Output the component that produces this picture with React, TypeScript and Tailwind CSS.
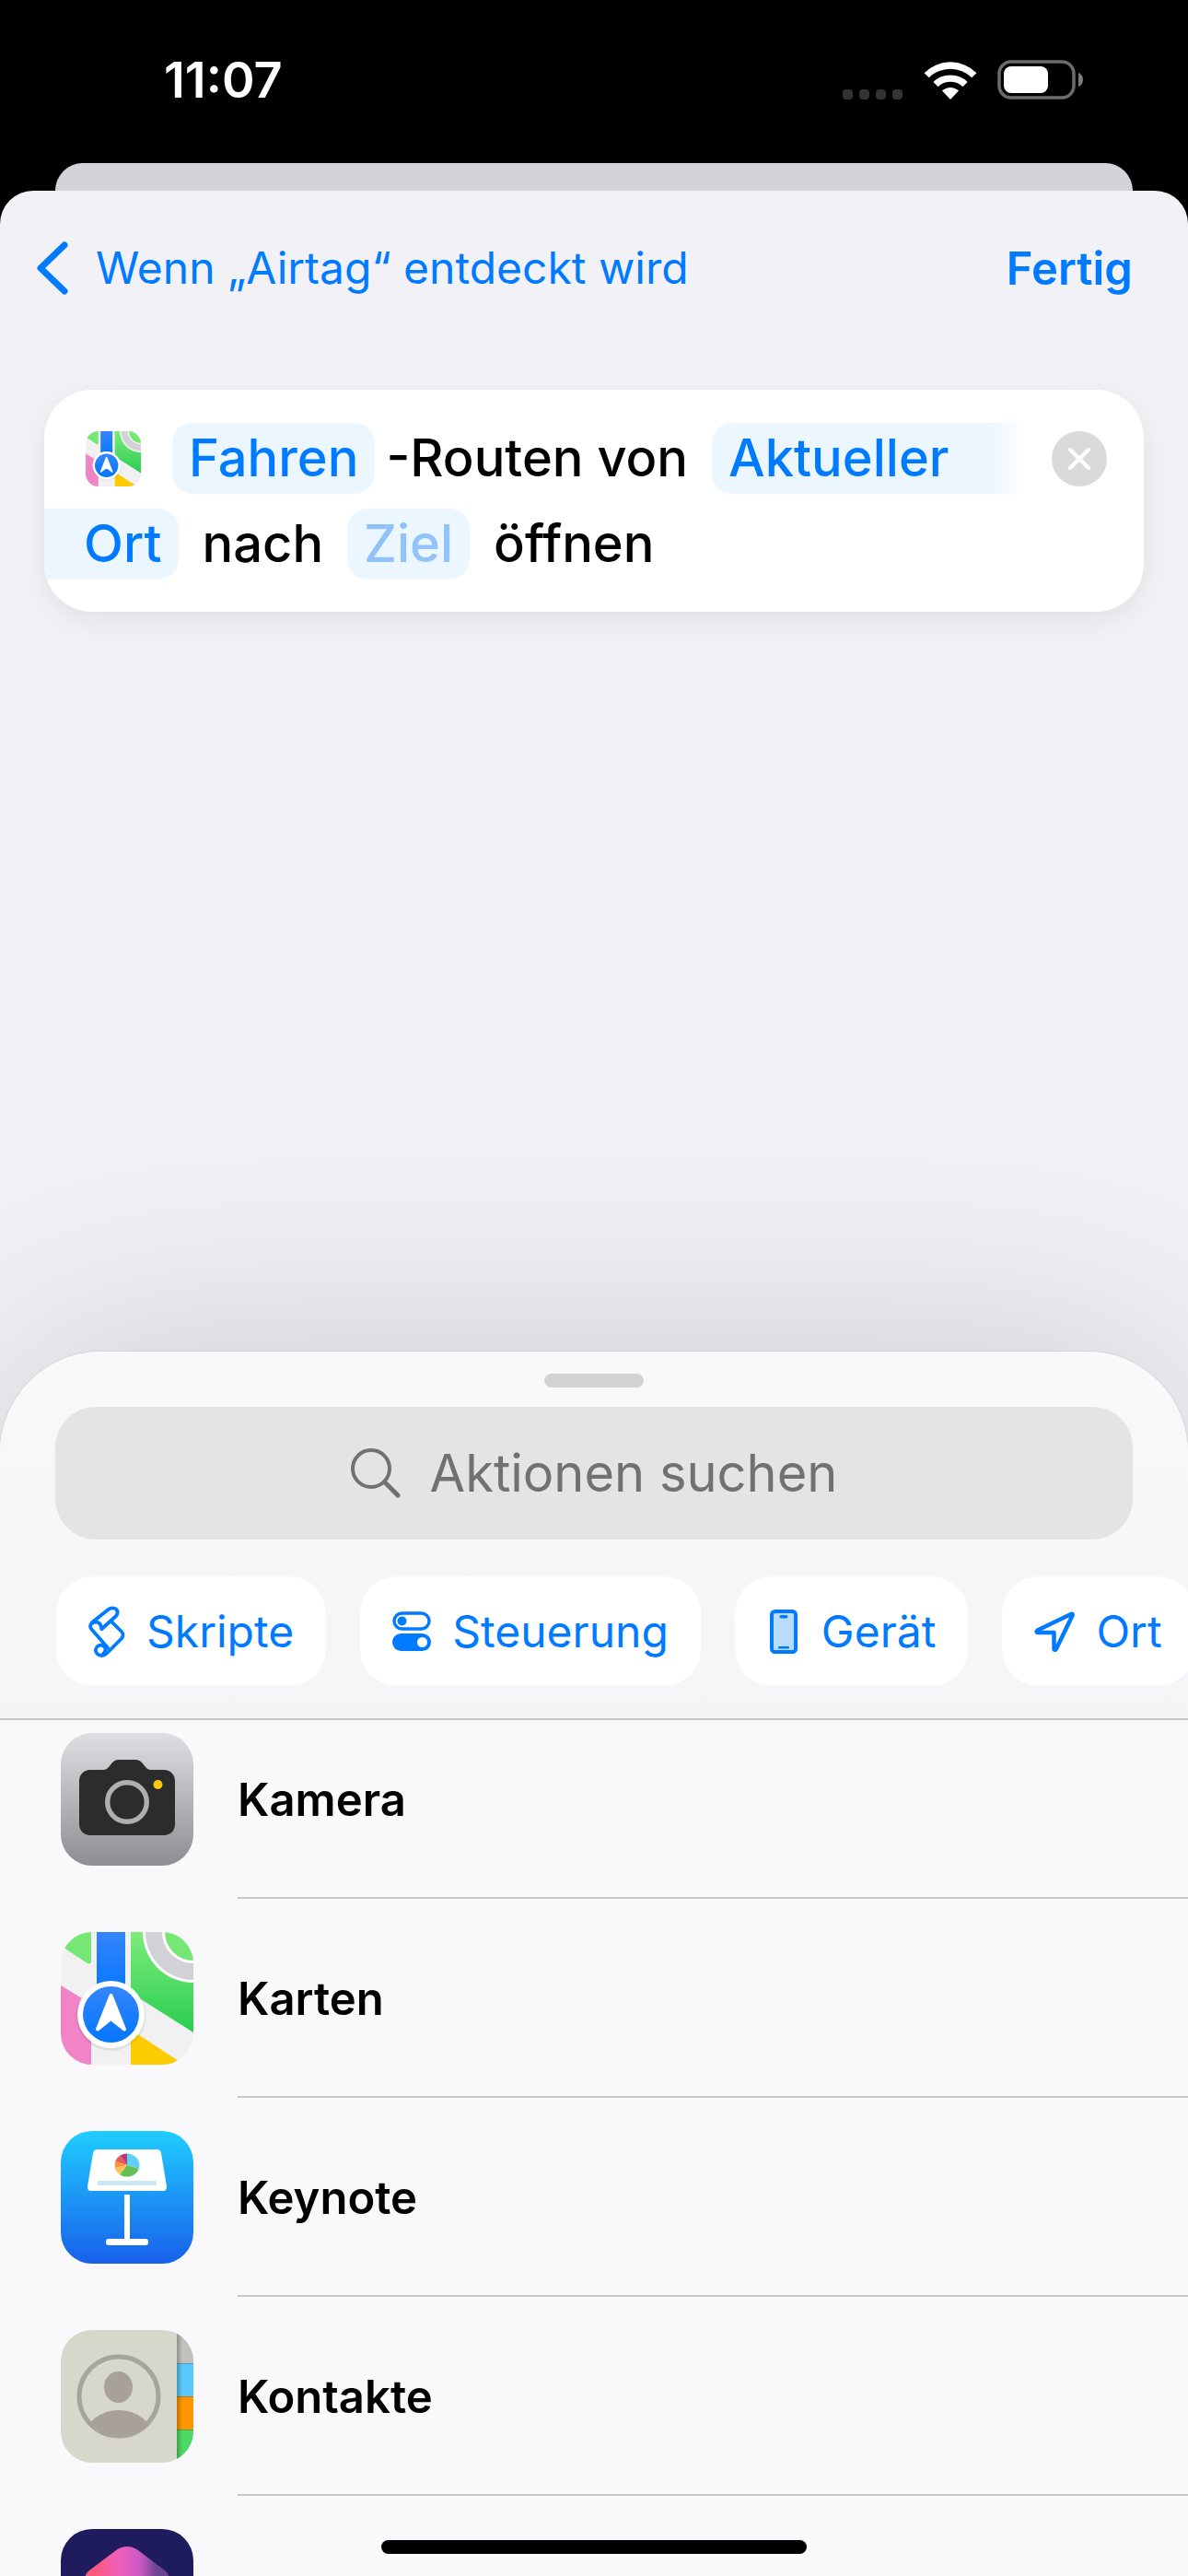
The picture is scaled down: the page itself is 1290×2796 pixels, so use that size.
import React from 'react';

const apps = [
  { name: 'Kamera', Icon: CameraIcon },
  { name: 'Karten', Icon: MapsIcon },
  { name: 'Keynote', Icon: KeynoteIcon },
  { name: 'Kontakte', Icon: ContactsIcon },
  { name: '', Icon: ShortcutsIcon },
];

const categories = [
  { name: 'Skripte', Icon: ScriptIcon },
  { name: 'Steuerung', Icon: ControlsIcon },
  { name: 'Gerät', Icon: DeviceIcon },
  { name: 'Ort', Icon: LocationIcon },
];

function CameraIcon({ className }: { className: string }) {
  return (
    <svg viewBox="0 0 144 144" className={className} aria-hidden="true">
      <defs>
        <linearGradient id="camera-bg" x1="0" y1="0" x2="0" y2="1">
          <stop offset="0" stopColor="#dfdee3" />
          <stop offset="1" stopColor="#8e8d92" />
        </linearGradient>
      </defs>
      <rect width="144" height="144" fill="url(#camera-bg)" />
      <path
        d="M32 40H46c3 0 4-1 6-3l4-5c2-2 4-3 7-3h18c3 0 5 1 7 3l4 5c2 2 3 3 6 3h14c7 0 12 5 12 12v47c0 7-5 12-12 12H32c-7 0-12-5-12-12V52c0-7 5-12 12-12z"
        fill="#2c2c2c"
      />
      <circle cx="72" cy="75" r="21.3" fill="none" stroke="#afafaf" strokeWidth="5.4" />
      <circle cx="105.5" cy="56" r="5" fill="#fdc910" />
    </svg>
  );
}

function MapsIcon({ className }: { className: string }) {
  return (
    <svg viewBox="0 0 144 144" className={className} aria-hidden="true">
      <defs>
        <linearGradient id="maps-green" x1="0" y1="0" x2="0" y2="1">
          <stop offset="0" stopColor="#7cec7b" />
          <stop offset="1" stopColor="#2acd50" />
        </linearGradient>
        <linearGradient id="maps-blue" x1="0" y1="0" x2="0" y2="1">
          <stop offset="0" stopColor="#3585fb" />
          <stop offset="1" stopColor="#0376fd" />
        </linearGradient>
      </defs>
      <rect width="144" height="144" fill="#f1f1f3" />
      <path d="M0 0H33V32c0 2-2 3-4 2L0 15z" fill="#76e775" />
      <path d="M76 0H144V109L76 66z" fill="url(#maps-green)" />
      <path d="M0 58L33 78V144H0z" fill="#f084c6" />
      <path d="M76 106L134 144H76z" fill="#fccb02" />
      <circle cx="144" cy="0" r="55" fill="#fff" />
      <circle cx="144" cy="0" r="52" fill="#d1d1d6" />
      <circle cx="144" cy="0" r="34" fill="#fff" />
      <circle cx="144" cy="0" r="31" fill="#76e775" />
      <rect x="39" width="31" height="70" fill="url(#maps-blue)" />
      <circle cx="54.5" cy="91" r="38" fill="#000" fillOpacity="0.07" />
      <circle cx="54.5" cy="89.5" r="36.5" fill="#fff" />
      <circle cx="54.5" cy="89.5" r="30.5" fill="url(#maps-blue)" />
      <path
        d="M54.5 69L40 105.5L54.5 94L69 105.5z"
        fill="#fff"
        stroke="#fff"
        strokeWidth="4"
        strokeLinejoin="round"
      />
    </svg>
  );
}

function KeynoteIcon({ className }: { className: string }) {
  return (
    <svg viewBox="0 0 144 144" className={className} aria-hidden="true">
      <defs>
        <linearGradient id="keynote-bg" x1="0" y1="0" x2="0" y2="1">
          <stop offset="0" stopColor="#20cdff" />
          <stop offset="1" stopColor="#1760ea" />
        </linearGradient>
      </defs>
      <rect width="144" height="144" fill="url(#keynote-bg)" />
      <path
        d="M40 20H104c3 0 5 2 5 4l6 36c0 3-1 5-4 5H33c-3 0-4-2-4-5l6-36c0-2 2-4 5-4z"
        fill="#fff"
      />
      <rect x="40" y="54" width="64" height="5" rx="1" fill="#cde6f6" />
      <path d="M72 37V24.5A13.5 12.5 0 0 1 84.8 41z" fill="#62d0f6" />
      <path d="M72 37L84.8 41A13.5 12.5 0 0 1 64 47.2z" fill="#63c154" />
      <path d="M72 37L64 47.2A13.5 12.5 0 0 1 58.9 40z" fill="#fdc052" />
      <path d="M72 37L58.9 40A13.5 12.5 0 0 1 59.3 32.7z" fill="#f7963b" />
      <path d="M72 37L59.3 32.7A13.5 12.5 0 0 1 64.5 26.6z" fill="#ec5a55" />
      <path d="M72 37L64.5 26.6A13.5 12.5 0 0 1 72 24.5z" fill="#a93f7c" />
      <path d="M69 69H75V117H69z" fill="#fff" />
      <rect x="49" y="117" width="46" height="7" rx="3" fill="#fff" />
    </svg>
  );
}

function ContactsIcon({ className }: { className: string }) {
  return (
    <svg viewBox="0 0 144 144" className={className} aria-hidden="true">
      <defs>
        <clipPath id="contacts-face">
          <circle cx="63" cy="72" r="44" />
        </clipPath>
        <linearGradient id="contacts-shade" x1="0" y1="0" x2="1" y2="0">
          <stop offset="0" stopColor="#000" stopOpacity="0.25" />
          <stop offset="1" stopColor="#000" stopOpacity="0" />
        </linearGradient>
      </defs>
      <rect width="144" height="144" fill="#d8d7cb" />
      <rect x="126" width="18" height="36" fill="#c2c0bc" />
      <rect x="126" y="36" width="18" height="36" fill="#5ac8fa" />
      <rect x="126" y="72" width="18" height="36" fill="#ff9500" />
      <rect x="126" y="108" width="18" height="36" fill="#4cd964" />
      <path d="M126 36.5H144M126 72.5H144M126 108.5H144" stroke="#000" strokeOpacity="0.2" />
      <rect x="126" width="6" height="144" fill="url(#contacts-shade)" />
      <circle cx="63" cy="72" r="43" fill="none" stroke="#a7a498" strokeWidth="5" />
      <ellipse cx="62.5" cy="62" rx="15.5" ry="17" fill="#a8a199" />
      <ellipse cx="63" cy="117" rx="37" ry="30" fill="#a8a199" clipPath="url(#contacts-face)" />
    </svg>
  );
}

function ShortcutsIcon({ className }: { className: string }) {
  return (
    <svg viewBox="0 0 144 144" className={className} aria-hidden="true">
      <defs>
        <linearGradient id="shortcuts-top" gradientUnits="userSpaceOnUse" x1="38" y1="54" x2="104" y2="54">
          <stop offset="0" stopColor="#fb5b7c" />
          <stop offset="0.4" stopColor="#f05fc0" />
          <stop offset="0.75" stopColor="#c658c4" />
          <stop offset="1" stopColor="#6c4590" />
        </linearGradient>
      </defs>
      <rect width="144" height="144" fill="#1e1c5c" />
      <path
        d="M60 23c8-5.5 16-5.5 24 0l29 22c6 5 6 10 0 15L84 82c-8 6-16 6-24 0L31 60c-6-5-6-10 0-15z"
        fill="url(#shortcuts-top)"
      />
    </svg>
  );
}

function ScriptIcon() {
  return (
    <svg
      viewBox="0 0 40 56"
      className="h-14 w-10"
      fill="none"
      stroke="currentColor"
      strokeWidth="3.8"
      strokeLinecap="round"
      strokeLinejoin="round"
      aria-hidden="true"
    >
      <path d="M14.5 25L30 11c2-2.5 2-5 .5-7s-6-2.5-9 0L4 18c-2.5 2.5-2.5 5-.5 7.5L21 45.5" />
      <path d="M4 19c4-3 9-1 9.5 3l1 3" />
      <path d="M25 17L36 28c2 2 2 5 0 7.5L20 51.5c-3.5 3.5-8 3-10.5.5s-2-6.5 1-8.5 8 0 8 3.5-1 4-2.5 5" />
    </svg>
  );
}

function ControlsIcon() {
  return (
    <svg viewBox="0 0 42 44" className="h-11 w-[42px]" aria-hidden="true">
      <rect x="2" y="2" width="38" height="17" rx="8.5" fill="none" stroke="currentColor" strokeWidth="3.4" />
      <circle cx="10.5" cy="10.5" r="5" fill="currentColor" />
      <rect y="24" width="42" height="19" rx="9.5" fill="currentColor" />
      <circle cx="32.5" cy="33.5" r="5.5" fill="#fff" />
    </svg>
  );
}

function DeviceIcon() {
  return (
    <svg viewBox="-3 0 36 48" className="h-12 w-9" aria-hidden="true">
      <rect x="2" y="2" width="26" height="44" rx="3.5" fill="#b9dcfc" stroke="currentColor" strokeWidth="4" />
      <rect x="10.5" y="6" width="9" height="3.5" rx="1.7" fill="currentColor" />
      <rect x="9" y="40" width="12" height="2.5" rx="1.2" fill="currentColor" />
    </svg>
  );
}

function LocationIcon() {
  return (
    <svg viewBox="0 0 44 44" className="size-11" aria-hidden="true">
      <path
        d="M40 3L3.5 20.5c-1.5 1-1 2.5.5 2.5H21.5v17c0 2 1.5 2.5 2.5.5L41.5 4.5c.5-1.5 0-2-1.5-1.500z"
        fill="none"
        stroke="currentColor"
        strokeWidth="4.5"
        strokeLinejoin="round"
      />
    </svg>
  );
}

function StatusBar() {
  return (
    <header className="flex h-[177px] items-center justify-between pr-[113px] pb-1 pl-[178px] text-white">
      <time className="text-[54px] leading-none font-semibold">11:07</time>
      <div className="flex items-center">
        <div className="mt-8 mr-[23px] flex gap-[7px]">
          <span className="size-[11px] rounded-sm bg-[#333]" />
          <span className="size-[11px] rounded-sm bg-[#333]" />
          <span className="size-[11px] rounded-sm bg-[#333]" />
          <span className="size-[11px] rounded-sm bg-[#333]" />
        </div>
        <svg viewBox="0 0 58 42" className="mr-[22px] h-[42px] w-[58px]" aria-label="WLAN">
          <path d="M0.6 13.2a40 40 0 0 1 56.8 0l-5.1 5.1a33 33 0 0 0-46.6 0z" fill="#fff" />
          <path d="M10.4 23a26.5 26.5 0 0 1 37.2 0l-5.2 5.2a19 19 0 0 0-26.8 0z" fill="#fff" />
          <path d="M20 32.5a13 13 0 0 1 18 0L29 42z" fill="#fff" />
        </svg>
        <svg viewBox="0 0 94 44" className="h-11 w-[94px]" aria-label="Batterie">
          <rect x="2" y="2" width="81" height="39" rx="13" fill="none" stroke="#6b6b6b" strokeWidth="3.5" />
          <rect x="7" y="7" width="48" height="29" rx="8" fill="#fff" />
          <path d="M88 14c3 1 5 4 5 7.5s-2 6.5-5 7.5z" fill="#7a7a7a" />
        </svg>
      </div>
    </header>
  );
}

function ActionCard() {
  return (
    <section className="mx-12 overflow-hidden rounded-[52px] bg-white pt-9 pb-[35px] text-[56px] leading-[77px] font-medium shadow-[0_10px_30px_rgba(0,0,0,0.07)]">
      <div className="flex items-center pr-10 pl-[45px]">
        <MapsIcon className="size-15 rounded-[14px]" />
        <button className="ml-[34px] rounded-[22px] bg-[#ebf6fe] px-[18px] text-[#007aff]">Fahren</button>
        <span className="ml-3 whitespace-pre">-Routen von</span>
        <button className="ml-[26px] w-[340px] rounded-l-[22px] bg-linear-to-r from-[#ebf6fe] from-88% to-white px-[18px] text-left text-[#007aff]">
          Aktueller
        </button>
        <button aria-label="Aktion entfernen" className="ml-auto flex size-15 items-center justify-center rounded-full bg-[#dadadb]">
          <svg viewBox="0 0 24 24" className="size-6" stroke="#fff" strokeWidth="4" strokeLinecap="round" aria-hidden="true">
            <path d="M2 2L22 22M22 2L2 22" />
          </svg>
        </button>
      </div>
      <div className="mt-4 flex items-center gap-[26px]">
        <button className="rounded-r-[22px] bg-[#ebf6fe] pr-[18px] pl-[43px] text-[#007aff]">Ort</button>
        <span>nach</span>
        <button className="rounded-[22px] bg-[#ebf6fe] px-[18px] text-[#92c3f8]">Ziel</button>
        <span>öffnen</span>
      </div>
    </section>
  );
}

function ActionPicker() {
  return (
    <section className="relative flex min-h-0 flex-1 flex-col overflow-hidden rounded-t-[110px] bg-[#f9f9fb] shadow-[0_0_280px_rgba(0,0,0,0.16),0_0_2px_rgba(0,0,0,0.2)]">
      <div className="border-b-2 border-[#c6c6c9] bg-linear-to-b from-[#f9f9fb] to-[#f5f5f7] pb-[35px]">
        <div className="mx-auto mt-6 h-[15px] w-[108px] rounded-full bg-[#d2d2d3]" />
        <label className="mx-[60px] mt-[21px] flex h-36 items-center justify-center gap-8 rounded-[44px] bg-[#e4e4e6] text-[#707174]">
          <svg viewBox="0 0 54 54" className="size-[54px]" fill="none" stroke="currentColor" strokeLinecap="round" aria-hidden="true">
            <circle cx="22" cy="22" r="20" strokeWidth="4" />
            <path d="M36.5 36.5L51 51" strokeWidth="5" />
          </svg>
          <input
            type="search"
            aria-label="Aktionen suchen"
            placeholder="Aktionen suchen"
            className="field-sizing-content bg-transparent text-[56px] outline-none placeholder:text-[#707174]"
          />
        </label>
        <nav className="mt-10 flex gap-[37px] overflow-hidden pl-[61px]">
          {categories.map(({ name, Icon }) => (
            <button
              key={name}
              className="flex h-[119px] shrink-0 items-center gap-[23px] rounded-[40px] bg-white px-[35px] text-5xl text-[#007aff]"
            >
              <Icon />
              {name}
            </button>
          ))}
        </nav>
      </div>
      <ul className="-mt-[22px] min-h-0 flex-1">
        {apps.map(({ name, Icon }) => (
          <li key={name} className="flex h-[216px] items-center pl-[66px]">
            <Icon className="size-36 shrink-0 rounded-[34px]" />
            <div className="ml-12 flex h-full flex-1 items-center border-b-2 border-[#c8c8cb] pt-1 text-[49px] font-semibold">
              {name}
            </div>
          </li>
        ))}
      </ul>
    </section>
  );
}

export default function App() {
  return (
    <div
      className="relative flex h-screen flex-col overflow-hidden bg-black text-black"
      style={{ fontFamily: 'Inter, "Liberation Sans", sans-serif' }}
    >
      <StatusBar />
      <div className="mx-[60px] h-[30px] rounded-t-[30px] bg-[#d4d3d8]" />
      <main className="flex min-h-0 flex-1 flex-col rounded-t-[36px] bg-[#f1f1f6]">
        <div className="flex h-[168px] items-center justify-between pr-[60px] pl-10 text-5xl text-[#007aff]">
          <button className="flex items-center gap-[30px]">
            <svg
              viewBox="0 0 34 58"
              className="h-[58px] w-[34px]"
              fill="none"
              stroke="currentColor"
              strokeWidth="7"
              strokeLinecap="round"
              strokeLinejoin="round"
              aria-hidden="true"
            >
              <path d="M30 4L4 29L30 54" />
            </svg>
            Wenn „Airtag“ entdeckt wird
          </button>
          <button className="text-[49px] font-semibold">Fertig</button>
        </div>
        <div className="pt-12 pb-[803px]">
          <ActionCard />
        </div>
        <ActionPicker />
      </main>
      <div className="absolute bottom-6 left-1/2 h-[15px] w-[462px] -translate-x-1/2 rounded-full bg-black" />
    </div>
  );
}
